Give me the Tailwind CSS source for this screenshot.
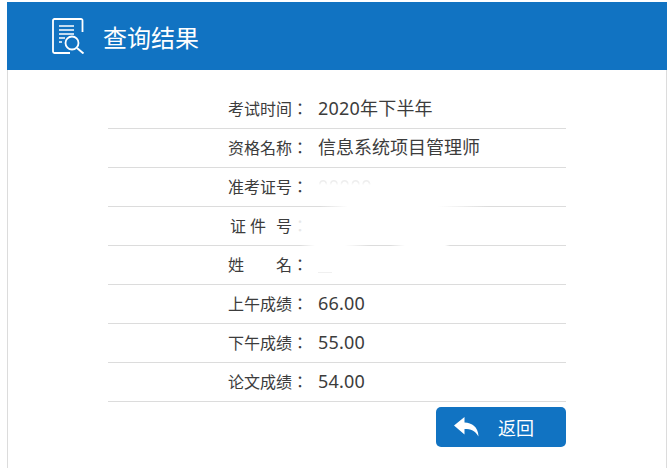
<!DOCTYPE html>
<html><head><meta charset="utf-8"><script src="https://cdn.jsdelivr.net/npm/@tailwindcss/browser@4"></script></head>
<body class="bg-white font-['Noto_Sans','Noto_Sans_CJK_SC',sans-serif]">
<div class="w-[672px] h-[468px] overflow-hidden bg-white pt-[2px] pl-[7px] pr-[5px]">
<div class="h-[466px] border-x border-[#dcdcdc] flex flex-col">
<header class="h-[68px] -mx-px bg-[#1173c2] flex items-center pl-[45px] shrink-0">
<svg class="w-[33px] h-[36px]" viewBox="0 0 33 36" fill="none" stroke="#fff" stroke-width="1.800"><path d="M30.500 14V2.500a1.500 1.500 0 0 0-1.500-1.500H2.500A1.500 1.500 0 0 0 1 2.500v31A1.500 1.500 0 0 0 2.500 35H18"/><path d="M7 8h15M7 12h15M7 16h15M7 20h6M7 24h3" stroke-width="1.600"/><circle cx="20" cy="25" r="6.500"/><path d="M25 30l6.500 5.500" stroke-width="2"/></svg>
<h1 class="ml-[18px] mt-[2px] text-[24px] leading-none text-white font-['Noto_Sans_CJK_SC',sans-serif]">查询结果</h1>
</header>
<main class="pt-[20px] pl-[100px] w-[558px]">
<div class="h-[39px] pb-[2px] border-b border-[#dcdcdc] flex items-center text-[#3c3c3c]"><span class="w-[200px] text-right text-[16px] font-['Noto_Sans_CJK_TC',sans-serif]">考试时间：</span><span class="ml-[10px] text-[18px] tracking-[0.2px]">2020年下半年</span></div>
<div class="h-[39px] pb-[2px] border-b border-[#dcdcdc] flex items-center text-[#3c3c3c]"><span class="w-[200px] text-right text-[16px] font-['Noto_Sans_CJK_TC',sans-serif]">资格名称：</span><span class="ml-[10px] text-[18px]">信息系统项目管理师</span></div>
<div class="h-[38px] pb-[2px] flex items-center text-[#3c3c3c]"><span class="w-[200px] text-right text-[16px] font-['Noto_Sans_CJK_TC',sans-serif]">准考证号：</span><span class="ml-[10px] text-[18px] leading-[18px] tracking-[0.5px] text-[#eeeeee] blur-[0.5px] [mask-image:linear-gradient(to_bottom,#000_30%,transparent_45%)]">00000</span></div>
<div class="h-px bg-[linear-gradient(to_right,#dcdcdc_212px,#ffffff_240px,#ffffff_330px,#dcdcdc_380px)]"></div>
<div class="h-[38px] pb-[2px] flex items-center text-[#3c3c3c]"><span class="w-[200px] text-right text-[16px] font-['Noto_Sans_CJK_TC',sans-serif]">证<span class="ml-[4px]">件</span><span class="ml-[10px]">号</span><span class="text-[#e8e8e8]">：</span></span></div>
<div class="h-px bg-[linear-gradient(to_right,#dcdcdc_192px,#ffffff_207px,#ffffff_237px,#dcdcdc_262px,#dcdcdc_282px,#ffffff_297px,#ffffff_337px,#dcdcdc_342px)]"></div>
<div class="h-[39px] pb-[2px] border-b border-[#dcdcdc] flex items-center text-[#3c3c3c]"><span class="w-[200px] text-right text-[16px] font-['Noto_Sans_CJK_TC',sans-serif]">姓　　名：</span><span class="ml-[10px] w-[14px] h-px mt-[16px] bg-[#f0f0f0]"></span></div>
<div class="h-[39px] pb-[2px] border-b border-[#dcdcdc] flex items-center text-[#3c3c3c]"><span class="w-[200px] text-right text-[16px] font-['Noto_Sans_CJK_TC',sans-serif]">上午成绩：</span><span class="ml-[10px] text-[18px] tracking-[0.2px]">66.00</span></div>
<div class="h-[39px] pb-[2px] border-b border-[#dcdcdc] flex items-center text-[#3c3c3c]"><span class="w-[200px] text-right text-[16px] font-['Noto_Sans_CJK_TC',sans-serif]">下午成绩：</span><span class="ml-[10px] text-[18px] tracking-[0.2px]">55.00</span></div>
<div class="h-[39px] pb-[2px] border-b border-[#dcdcdc] flex items-center text-[#3c3c3c]"><span class="w-[200px] text-right text-[16px] font-['Noto_Sans_CJK_TC',sans-serif]">论文成绩：</span><span class="ml-[10px] text-[18px] tracking-[0.2px]">54.00</span></div>
<div class="flex justify-end mt-[5px]">
<button class="w-[130px] h-[40px] rounded-[5px] bg-[#1173c2] text-white flex items-center pl-[18px]">
<svg class="w-[25px] h-[20px]" viewBox="0 0 25 20" fill="#fff"><path d="M0 8.500 10.500 0v5.500C18 6 24 9.500 24.500 19.500 21 13.500 17 12 10.500 12v5.500z"/></svg>
<span class="ml-[19px] text-[18px] font-['Noto_Sans_CJK_SC',sans-serif]">返回</span></button>
</div>
</main>
</div></div>
</body></html>
